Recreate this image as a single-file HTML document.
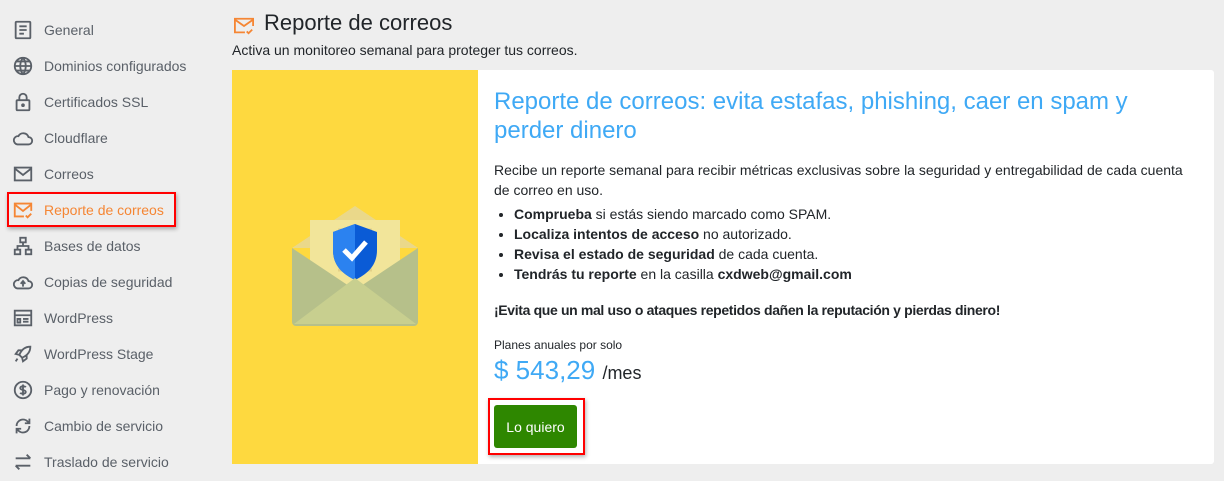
<!DOCTYPE html>
<html><head><meta charset="utf-8"><style>
body{margin:0;width:1224px;height:481px;background:#eeeeee;font-family:"Liberation Sans",sans-serif;position:relative;overflow:hidden;color:#212529}
.nav{position:absolute;left:0;top:0;width:215px}
.it{position:absolute;left:12px;height:24px;display:flex;align-items:center;font-size:14px;color:#5a6068}
.it svg{width:22px;height:22px;margin-right:10px;fill:none;stroke:#5a6068;stroke-width:2}
.sel{position:absolute;left:7px;top:192px;width:165px;height:31px;border:2px solid #f00;box-shadow:1px 2px 4px rgba(0,0,0,.3)}
.card{position:absolute;left:232px;top:70px;width:982px;height:394px;background:#fff;border-radius:3px}
.yel{position:absolute;left:0;top:0;width:246px;height:394px;background:#fed93f}
.r{position:absolute;left:262px;top:0;right:20px}
h2{font-weight:normal;color:#3fa9f5;font-size:24px;line-height:29px;margin:17px 0 0}
p{font-size:14px;line-height:20px;margin:0}
ul{margin:0;padding-left:20px;font-size:14px;line-height:20px}
</style></head><body>
<div class="nav">
<div class="it" style="top:18px"><svg viewBox="0 0 24 24"><rect x="4" y="3" width="16" height="18" rx="1"/><path d="M8 8h8M8 12h8M8 16h5"/></svg>General</div>
<div class="it" style="top:54px"><svg viewBox="0 0 24 24"><circle cx="12" cy="12" r="9"/><path d="M3 12h18M12 3c-4 5-4 13 0 18M12 3c4 5 4 13 0 18M5 7h14M5 17h14"/></svg>Dominios configurados</div>
<div class="it" style="top:90px"><svg viewBox="0 0 24 24"><rect x="5" y="10" width="14" height="11" rx="1"/><path d="M8 10V7a4 4 0 0 1 8 0v3"/><circle cx="12" cy="15.5" r="1"/></svg>Certificados SSL</div>
<div class="it" style="top:126px"><svg viewBox="0 0 24 24"><path d="M6 19h12a4 4 0 0 0 0-8 6 6 0 0 0-11-1 4.5 4.5 0 0 0-1 9z"/></svg>Cloudflare</div>
<div class="it" style="top:162px"><svg viewBox="0 0 24 24"><rect x="3" y="5" width="18" height="14"/><path d="M3 6l9 7 9-7"/></svg>Correos</div>
<div class="it" style="top:198px;color:#f58634"><svg viewBox="0 0 24 24" style="stroke:#f58634"><path d="M13 19H3V5h18v8"/><path d="M3 6l9 7 9-7M15 18l2 2 4-4"/></svg>Reporte de correos</div>
<div class="it" style="top:234px"><svg viewBox="0 0 24 24"><rect x="9" y="3" width="6" height="5"/><rect x="3" y="16" width="6" height="5"/><rect x="15" y="16" width="6" height="5"/><path d="M12 8v4M6 16v-4h12v4"/></svg>Bases de datos</div>
<div class="it" style="top:270px"><svg viewBox="0 0 24 24"><path d="M6 19h12a4 4 0 0 0 0-8 6 6 0 0 0-11-1 4.5 4.5 0 0 0-1 9z"/><path d="M12 17v-5M9.5 14l2.5-3 2.5 3"/></svg>Copias de seguridad</div>
<div class="it" style="top:306px"><svg viewBox="0 0 24 24"><rect x="3" y="4" width="18" height="16"/><path d="M3 9h18M12 13h6M12 16h6M6 13h3v4H6z"/></svg>WordPress</div>
<div class="it" style="top:342px"><svg viewBox="0 0 24 24"><path d="M20 4c-6 0-10 4-12 9l3 3c5-2 9-6 9-12zM8 13l-4-1 3-4h4M11 16l1 4 4-3v-4M6 17l-2 3"/></svg>WordPress Stage</div>
<div class="it" style="top:378px"><svg viewBox="0 0 24 24"><circle cx="12" cy="12" r="9"/><path d="M15 9c-1-1.5-6-1.5-6 1s6 1.5 6 4-5 2.5-6 1M12 6v12"/></svg>Pago y renovación</div>
<div class="it" style="top:414px"><svg viewBox="0 0 24 24"><path d="M5 12a7 7 0 0 1 12-5l2 2M19 12a7 7 0 0 1-12 5l-2-2M19 4v5h-5M5 20v-5h5"/></svg>Cambio de servicio</div>
<div class="it" style="top:450px"><svg viewBox="0 0 24 24"><path d="M4 8h16M16 4l4 4M20 16H4M8 20l-4-4"/></svg>Traslado de servicio</div>
</div>
<div class="sel"></div>
<svg style="position:absolute;left:233px;top:16px" width="22" height="20" viewBox="0 0 24 22" fill="none" stroke="#f58634" stroke-width="2"><path d="M13 18H2V3h20v8"/><path d="M2 4l10 7 10-7M15 17l2 2 4-4"/></svg>
<div style="position:absolute;left:264px;top:10px;font-size:22px;color:#212529">Reporte de correos</div>
<div style="position:absolute;left:232px;top:42px;font-size:14px">Activa un monitoreo semanal para proteger tus correos.</div>
<div class="card">
<div class="yel"><svg style="position:absolute;left:60px;top:136px" width="126" height="120" viewBox="0 0 126 120">
<path d="M0 42L63 0l63 42z" fill="#ead88a"/>
<rect x="18" y="14" width="90" height="80" fill="#f2e59a"/>
<path d="M46 24h34M46 38h34M46 52h34M46 64h34" stroke="#e2d088" stroke-width="3"/>
<path d="M63 18l22 8v18c0 16-10 24-22 30-12-6-22-14-22-30V26z" fill="#0a5bd6"/>
<path d="M63 18v56c-12-6-22-14-22-30V26z" fill="#2b82f0"/>
<path d="M52 44l8 8 14-16" stroke="#fff" stroke-width="5" fill="none"/>
<path d="M0 42l63 42 63-42v74a4 4 0 0 1-4 4H4a4 4 0 0 1-4-4z" fill="#b6c08a"/>
<path d="M2 118l61-46 61 46z" fill="#c8cf8f"/>
</svg></div>
<div class="r">
<h2>Reporte de correos: evita estafas, phishing, caer en spam y perder dinero</h2>
<p style="margin-top:15px">Recibe un reporte semanal para recibir métricas exclusivas sobre la seguridad y entregabilidad de cada cuenta de correo en uso.</p>
<ul style="margin-top:4px"><li><b>Comprueba</b> si estás siendo marcado como SPAM.</li><li><b>Localiza intentos de acceso</b> no autorizado.</li><li><b>Revisa el estado de seguridad</b> de cada cuenta.</li><li><b>Tendrás tu reporte</b> en la casilla <b>cxdweb@gmail.com</b></li></ul>
<p style="margin-top:16px;letter-spacing:-0.35px"><b>¡Evita que un mal uso o ataques repetidos dañen la reputación y pierdas dinero!</b></p>
<p style="margin-top:17px;font-size:12px;line-height:16px">Planes anuales por solo</p>
<div style="margin-top:0;font-size:26px;line-height:34px;color:#3fa9f5">$ 543,29 <span style="font-size:18px;color:#212529">/mes</span></div>
</div>
</div>
<div style="position:absolute;left:488px;top:398px;width:93px;height:53px;border:2px solid #f00;box-shadow:1px 2px 4px rgba(0,0,0,.3)"></div>
<div style="position:absolute;left:494px;top:405px;width:83px;height:43px;background:#2e8700;border-radius:3px;color:#fff;font-size:14px;display:flex;align-items:center;justify-content:center">Lo quiero</div>
</body></html>
